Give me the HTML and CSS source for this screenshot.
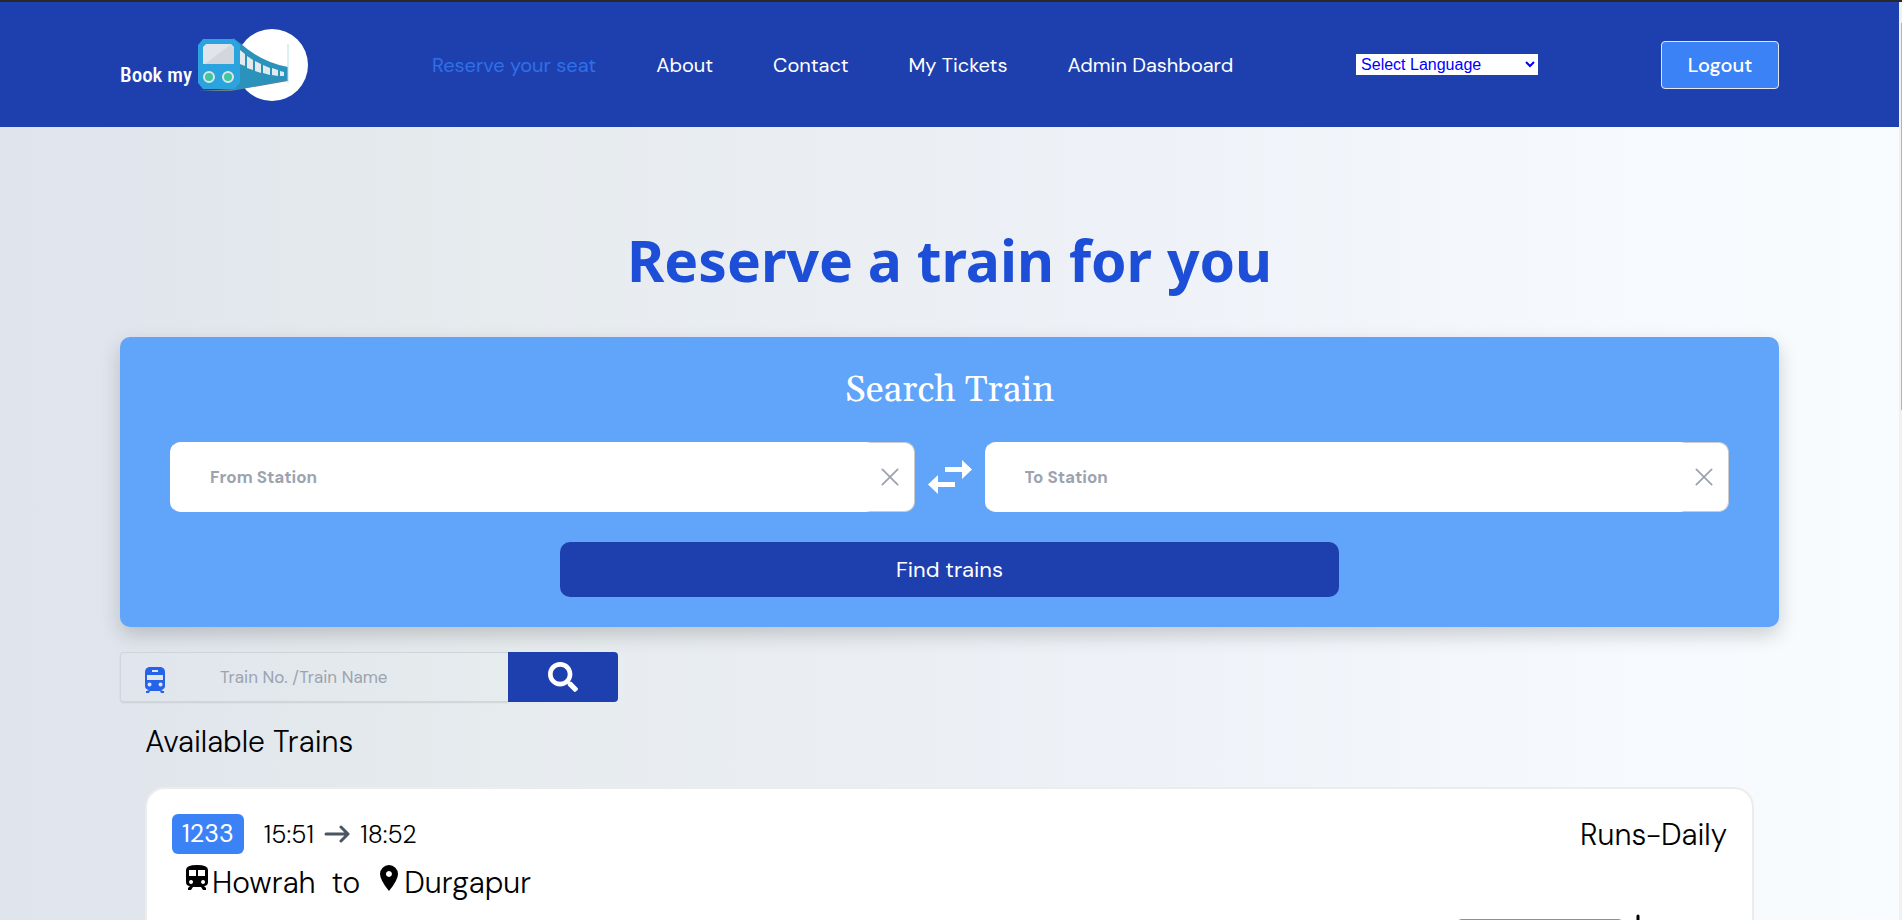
FILE: index.html
```
<!DOCTYPE html>
<html lang="en">
<head>
  <meta charset="UTF-8" />
  <meta name="viewport" content="width=device-width, initial-scale=1" />
  <title>Book my train</title>
  <link rel="stylesheet" href="styles.css">
</head>
<body>
  <header class="navbar">
    <a class="logo" href="#" aria-label="Book my train">
      <span class="logo-text">Book my</span>
      <svg class="logo-train" viewBox="0 0 112 74" aria-hidden="true">
        <circle cx="75" cy="37" r="36" fill="#fff" />
        <path d="M1 63 L38 61 L91 51 L91 53 L34 63 Z" fill="#6b7f86" />
        <path d="M36 10 L43 15 Q64 34 91 39 V52 L43 61 L32 61 Z" fill="#2b93bb" />
        <path d="M6 11 H37 L43 17 V55 L37 61 H6 L1 55 V17 Z" fill="#2aa3df" />
        <path d="M9 16 H34 L37 19 V36 H6 V19 Z" fill="#dfe5ea" />
        <path d="M33 17 L37 20 V36 H8 Z" fill="#d3d6dd" />
        <path d="M43 22 L48 26 V38 L43 36 Z M50 28 L56 32 V42 L50 40 Z M58 33 L64 36 V45 L58 43 Z M66 37 L73 40 V47 L66 45 Z M75 40 L81 42 V48 L75 47 Z M83 43 L87 44 V48 L83 48 Z" fill="#e3eaee" />
        <circle cx="12" cy="49" r="5" fill="#3fc7a0" stroke="#dbe6e6" stroke-width="2" />
        <circle cx="31" cy="49" r="5" fill="#3fc7a0" stroke="#dbe6e6" stroke-width="2" />
        <path d="M91 16 V55" stroke="#b5e0ee" />
      </svg>
    </a>
    <nav class="nav-links">
      <a class="active" href="#">Reserve your seat</a>
      <a href="#">About</a>
      <a href="#">Contact</a>
      <a href="#">My Tickets</a>
      <a href="#">Admin Dashboard</a>
    </nav>
    <select class="language" aria-label="Language">
      <option>Select Language</option>
    </select>
    <button class="logout" type="button">Logout</button>
  </header>

  <main class="page">
    <h1>Reserve a train for you</h1>

    <form class="search-card">
      <h2>Search Train</h2>
      <div class="stations">
        <div class="station">
          <input type="text" placeholder="From Station" aria-label="From Station">
          <button type="button" aria-label="Clear from station">
            <svg viewBox="0 0 20 20"><path d="M1.500 1.500 L18.500 18.500 M18.500 1.500 L1.500 18.500" /></svg>
          </button>
        </div>
        <button class="swap" type="button" aria-label="Swap stations">
          <svg viewBox="0 0 44 34"><path d="M17 7 H34 V0 L44 9.500 L34 19 V12 H17 Z M27 22 H10 V15 L0 24.500 L10 34 V27 H27 Z" /></svg>
        </button>
        <div class="station">
          <input type="text" placeholder="To Station" aria-label="To Station">
          <button type="button" aria-label="Clear to station">
            <svg viewBox="0 0 20 20"><path d="M1.500 1.500 L18.500 18.500 M18.500 1.500 L1.500 18.500" /></svg>
          </button>
        </div>
      </div>
      <button class="find" type="submit">Find trains</button>
    </form>

    <form class="train-search">
      <label class="train-field">
        <svg viewBox="0 0 20 26" aria-hidden="true">
          <path fill-rule="evenodd" d="M4 0 H16 Q20 1 20 5 V19 Q20 22 16 23 L18 24 H19 V26 H16 L15 24 H5 L4 26 H1 V24 H2 L4 23 Q0 22 0 19 V5 Q0 1 4 0 Z M7 3 V5 H13 V3 Z M2 8 V13 H18 V8 Z M4.500 15.500 A2 2 0 1 0 4.600 15.500 Z M15.500 15.500 A2 2 0 1 0 15.600 15.500 Z" />
        </svg>
        <input type="text" placeholder="Train No. /Train Name" aria-label="Train number or name">
      </label>
      <button type="submit" aria-label="Search">
        <svg viewBox="0 0 512 512"><path d="M505 442.700L405.300 343c-4.500-4.500-10.600-7-17-7H372c27.600-35.300 44-79.700 44-128C416 93.100 322.900 0 208 0S0 93.100 0 208s93.100 208 208 208c48.300 0 92.700-16.400 128-44v16.300c0 6.400 2.500 12.500 7 17l99.700 99.700c9.400 9.400 24.600 9.400 33.900 0l28.300-28.300c9.400-9.400 9.400-24.600.1-34zM208 336c-70.700 0-128-57.200-128-128 0-70.700 57.200-128 128-128 70.700 0 128 57.200 128 128 0 70.700-57.200 128-128 128z" /></svg>
      </button>
    </form>

    <section class="results">
      <h3>Available Trains</h3>
      <article class="train-card">
        <div class="train-row">
          <span class="train-number">1233</span>
          <div class="times">
            <span>15:51</span>
            <svg viewBox="0 0 26 18" aria-hidden="true"><path d="M2 9 H24 M17 2 L24 9 L17 16" /></svg>
            <span>18:52</span>
          </div>
          <span class="runs">Runs-Daily</span>
        </div>
        <div class="route">
          <svg class="route-train" viewBox="0 0 22 26" aria-hidden="true">
            <path fill-rule="evenodd" d="M11 0 Q22 0 22 5 V17 Q22 21 18 21 L20 23 V25 H17 L15 22 H7 L5 25 H2 V23 L4 21 Q0 21 0 17 V5 Q0 0 11 0 Z M3 5 V11 H10 V5 Z M12 5 V11 H19 V5 Z M5 15 A2 2 0 1 0 5.100 15 Z M17 15 A2 2 0 1 0 17.100 15 Z" />
          </svg>
          <span>Howrah</span>
          <span class="route-to">to</span>
          <svg class="route-pin" viewBox="0 0 18 26" aria-hidden="true">
            <path fill-rule="evenodd" d="M9 0 A9 9 0 0 0 0 9 Q0 15 9 26 Q18 15 18 9 A9 9 0 0 0 9 0 Z M9 6 A3 3 0 1 1 8.900 6 Z" />
          </svg>
          <span>Durgapur</span>
        </div>
        <div class="card-actions">
          <button class="book" type="button" aria-label="Book"></button>
          <button class="expand" type="button" aria-label="Show details">
            <svg viewBox="0 0 20 30"><path d="M10 2 V28 M3 21 L10 28 L17 21" /></svg>
          </button>
        </div>
      </article>
    </section>
  </main>
  <div class="scroll-track"><div class="scroll-thumb"></div></div>
</body>
</html>
```

FILE: styles.css
```
* {
  box-sizing: border-box;
}

body {
  margin: 0;
  height: 100vh;
  overflow: hidden;
  border-top: 2px solid #26282c;
  background: linear-gradient(to right, #dfe4ed, #e6ebee 25%, #eef1f7 60%, #f6fafe 85%, #f8fcff);
  color: #000;
  font-family: "DM Sans", Inter, sans-serif;
}

button,
input {
  font: inherit;
}

button {
  padding: 0;
  border: 0;
  background: none;
  color: #fff;
  cursor: pointer;
}

h1,
h2,
h3 {
  margin: 0;
}

.navbar {
  display: flex;
  align-items: center;
  justify-content: space-between;
  height: 125px;
  padding: 0 123px 0 120px;
  background: #1e40af;
}

.logo {
  display: flex;
  align-items: center;
  justify-content: space-between;
  width: 189px;
  color: #fff;
  text-decoration: none;
}

.logo-text {
  padding-top: 20px;
  font-family: "Liberation Sans Narrow", "Roboto Condensed", Roboto, sans-serif;
  font-size: 21px;
  font-weight: 500;
  white-space: nowrap;
}

.logo-train {
  width: 112px;
  height: 74px;
}

.nav-links {
  display: flex;
  gap: 60px;
  font-size: 20px;
}

.nav-links a {
  color: #fff;
  text-decoration: none;
}

.nav-links .active {
  color: #2f6fe8;
}

.language {
  width: 182px;
  height: 21px;
  padding: 0 1px;
  border: 0;
  background: #fff;
  color: #00f;
  font-family: "Liberation Sans", sans-serif;
  font-size: 16px;
}

.logout {
  width: 118px;
  height: 48px;
  border: 1px solid #e5e7eb;
  border-radius: 4px;
  background: #3b82f6;
  font-size: 20px;
  font-weight: 500;
}

.page {
  padding: 91px 123px 0 120px;
}

h1 {
  color: #1d4ed8;
  font-family: "Noto Sans", sans-serif;
  font-size: 57px;
  line-height: 84px;
  text-align: center;
}

.search-card {
  display: flex;
  flex-direction: column;
  align-items: center;
  margin-top: 35px;
  padding: 30px 50px;
  border-radius: 10px;
  background: #60a5fa;
  box-shadow: 0 8px 20px rgba(0, 0, 0, 0.18);
}

h2 {
  color: #fff;
  font-family: Gelasio, Georgia, "Liberation Serif", serif;
  font-size: 37px;
  font-weight: 400;
  line-height: 48px;
}

.stations {
  display: flex;
  align-items: center;
  gap: 13px;
  width: 100%;
  margin-top: 27px;
}

.station {
  display: flex;
  flex: 1;
  height: 70px;
  border: 1px solid #ccc;
  border-left-color: #fff;
  border-radius: 10px;
  background: #fff;
}

.station input {
  flex: 1;
  min-width: 0;
  margin: -1px 0;
  padding: 0 39px;
  border: 0;
  border-radius: 10px;
  background: #fff;
  font-size: 17px;
  font-weight: 700;
}

input::placeholder {
  color: #9ca3af;
  opacity: 1;
}

.station button {
  width: 38px;
  padding-right: 10px;
}

.station svg {
  display: block;
  width: 18px;
  height: 18px;
  margin: 0 auto;
  fill: none;
  stroke: #9ca3af;
  stroke-width: 2;
  stroke-linecap: round;
}

.swap svg {
  display: block;
  width: 44px;
  height: 34px;
  fill: #fff;
}

.find {
  width: 50%;
  height: 55px;
  margin-top: 30px;
  border-radius: 10px;
  background: #1e40af;
  font-size: 22px;
}

.train-search {
  display: flex;
  width: 498px;
  height: 50px;
  margin-top: 25px;
}

.train-field {
  display: flex;
  flex: 1;
  align-items: center;
  padding-left: 24px;
  border: 1px solid #d1d5db;
  border-right: 0;
  border-radius: 4px 0 0 4px;
  box-shadow: 0 1px 2px rgba(0, 0, 0, 0.1);
}

.train-field svg {
  width: 20px;
  height: 26px;
  margin-top: 5px;
  fill: #2563eb;
}

.train-field input {
  flex: 1;
  min-width: 0;
  padding: 0 0 0 55px;
  border: 0;
  background: none;
  font-size: 17px;
}

.train-search button {
  width: 110px;
  border-radius: 0 4px 4px 0;
  background: #1e40af;
}

.train-search button svg {
  display: block;
  width: 30px;
  height: 30px;
  margin: 0 auto;
  fill: #fff;
}

.results {
  padding: 20px 25px;
}

h3 {
  font-size: 30px;
  font-weight: 300;
  line-height: 40px;
}

.train-card {
  margin-top: 25px;
  padding: 25px;
  border: 2px solid #ececec;
  border-radius: 20px;
  background: #fff;
}

.train-row {
  display: flex;
  align-items: center;
  height: 40px;
}

.train-number {
  padding: 0 10px;
  border-radius: 6px;
  background: #3b82f6;
  color: #fff;
  font-size: 25px;
  line-height: 40px;
}

.times {
  display: flex;
  align-items: center;
  gap: 10px;
  margin-left: 20px;
  font-size: 25px;
  font-weight: 300;
}

.times svg {
  width: 26px;
  height: 18px;
  fill: none;
  stroke: #4b5563;
  stroke-width: 3;
  stroke-linecap: round;
  stroke-linejoin: round;
}

.runs {
  margin-left: auto;
  font-size: 30px;
  font-weight: 300;
}

.route {
  display: flex;
  align-items: center;
  height: 40px;
  margin-top: 8px;
  padding-left: 14px;
  font-size: 30px;
  font-weight: 300;
}

.route svg {
  height: 26px;
  margin-bottom: 8px;
}

.route-train {
  width: 22px;
  margin-right: 4px;
}

.route-pin {
  width: 18px;
  margin-right: 6px;
}

.route-to {
  margin: 0 20px 0 16px;
}

.card-actions {
  display: flex;
  align-items: flex-start;
  justify-content: flex-end;
  gap: 4px;
  margin-top: 12px;
  padding-right: 79px;
}

.book {
  width: 168px;
  height: 50px;
  margin-top: 5px;
  border-radius: 6px;
  background: #f97316;
}

.expand svg {
  display: block;
  width: 20px;
  height: 30px;
  fill: none;
  stroke: #000;
  stroke-width: 3;
  stroke-linecap: round;
}

/* page scroll indicator */
.scroll-track {
  position: fixed;
  top: 2px;
  right: 0;
  bottom: 0;
  width: 3px;
  padding-top: 21px;
  background: #f1f1f1;
}

.scroll-thumb {
  width: 1px;
  height: 387px;
  margin-left: auto;
  background: #b5b5b5;
}
```
